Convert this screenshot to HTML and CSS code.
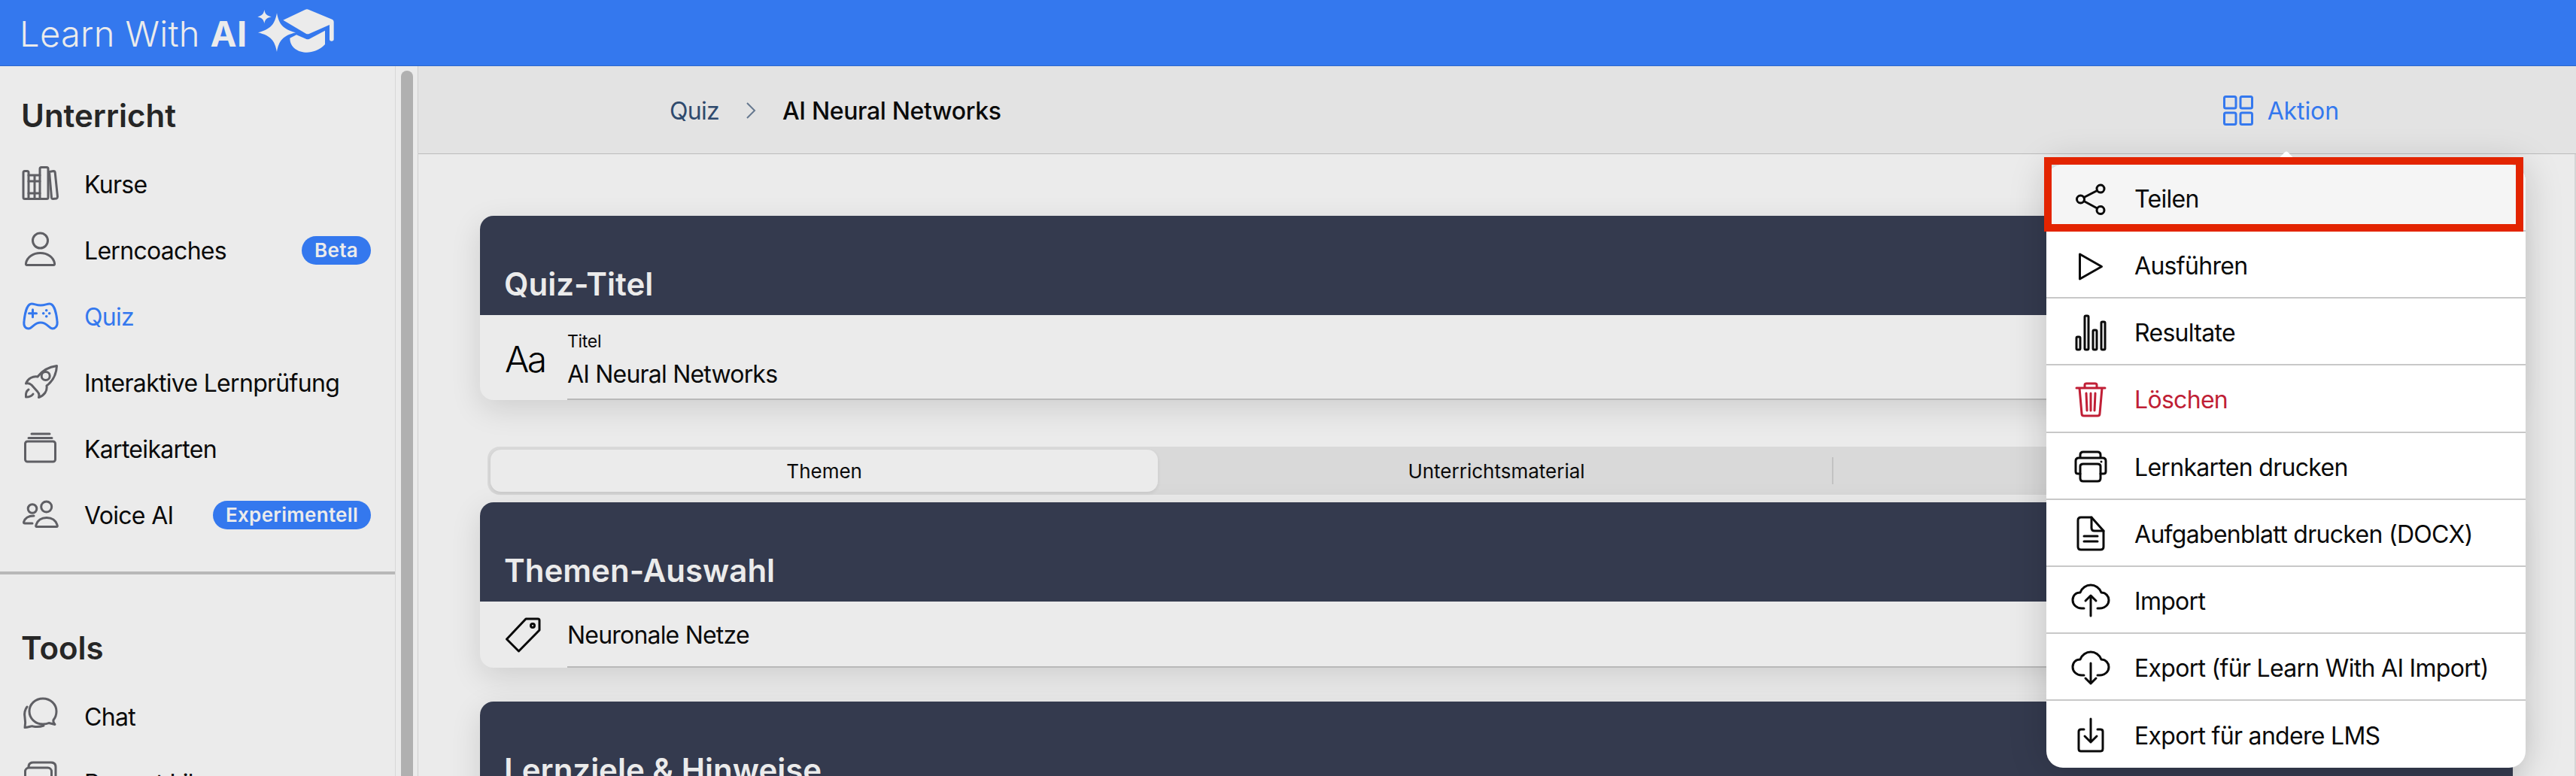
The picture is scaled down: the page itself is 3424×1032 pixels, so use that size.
FILE: index.html
```html
<!DOCTYPE html>
<html lang="de">
<head>
<meta charset="utf-8">
<title>Learn With AI</title>
<link rel="stylesheet" href="styles.css">
</head>
<body>
<header class="topbar">
  <div class="logo-text">Learn With <b>AI</b></div>
  <svg class="logo-mark" viewBox="0 0 390 240"><path d="M120 40C128 85 145 105 195 118C145 130 128 150 120 195C112 150 95 130 45 118C95 105 112 85 120 40Z"/><path d="M70 27C73 45 80 50 98 55C80 60 73 65 70 82C67 65 60 60 43 55C60 50 67 45 70 27Z"/><path d="M232 27Q240 23 248 27L340 65Q347 68 347 75V145Q347 152 338 152Q330 152 330 145V87L250 122Q243 126 236 122L145 68Z"/><path d="M172 140L198 127L236 143Q243 146 250 143L312 110V165C290 188 262 197 240 197C205 197 172 178 172 140Z"/></svg>
</header>
<div class="shell">
  <aside class="sidebar">
    <nav class="nav">
      <h2 class="nav-title">Unterricht</h2>
      <a class="nav-row">
        <svg class="ico" viewBox="0 0 48 48"><rect x="1" y="6.500" width="7" height="37" rx="2"/><path d="M8 12H23M8 20H23M8 36H23M8 43.500H23M16 12V43.500"/><rect x="23" y="1.500" width="11" height="42" rx="2"/><path d="M35.500 7.500L41 6.500Q43 6.500 43.200 8.500L46.500 40.500Q46.500 42.500 45 43L40.500 43.500Q38.800 43.500 38.500 41.500Z"/></svg>
        <span>Kurse</span>
      </a>
      <a class="nav-row">
        <svg class="ico" viewBox="0 0 48 48"><circle cx="23.500" cy="11" r="10"/><path d="M6 43.500Q4 43.500 4.500 41C6 33 14 27.500 23.500 27.500S41 33 42.500 41Q43 43.500 41 43.500Z"/></svg>
        <span>Lerncoaches</span>
        <em class="badge">Beta</em>
      </a>
      <a class="nav-row active">
        <svg class="ico" viewBox="0 0 48 48"><path d="M12 7C16 7 18 9 24 9S32 7 36 7C42 7 45 20 46 30C47 37 43 40 40 40C35 40 33 32 24 32S13 40 8 40C4 40 1 37 2 30C3 20 6 7 12 7Z"/><path d="M8.500 19.700H18.500M13.500 14.700V24.700"/><circle class="dot" cx="31.700" cy="15.700" r="1.800"/><circle class="dot" cx="31.700" cy="23.700" r="1.800"/><circle class="dot" cx="27.700" cy="19.700" r="1.800"/><circle class="dot" cx="35.700" cy="19.700" r="1.800"/></svg>
        <span>Quiz</span>
      </a>
      <a class="nav-row">
        <svg class="ico" viewBox="0 0 48 48"><path d="M45.500 1.500C34 3 26 8 20 16C14 15 7 18 4.500 25C8 24 10 25 12 27L20 36C22 38 22.500 40 21.500 43.500C29 41 33 35 32 28C40 22 45 13 45.500 1.500Z"/><circle cx="30.700" cy="15" r="5.500"/><path d="M8 33C5 35 4 39 4.500 43C9 43 12 42 14 39"/></svg>
        <span>Interaktive Lernprüfung</span>
      </a>
      <a class="nav-row">
        <svg class="ico" viewBox="0 0 48 48"><rect x="3.500" y="14" width="40" height="27" rx="3"/><path d="M8 9.500H39M12 4H36"/></svg>
        <span>Karteikarten</span>
      </a>
      <a class="nav-row">
        <svg class="ico" viewBox="0 0 48 48"><circle cx="31.700" cy="13" r="7"/><circle cx="13" cy="15.500" r="5.800"/><path d="M19 39.500Q17 39.500 18 37C20 31 25 27.500 32 27.500S44 31 46 37Q47 39.500 45 39.500Z"/><path d="M15 25C8 25 3 28 1.500 33.500Q1.500 35 3 35H13"/></svg>
        <span>Voice AI</span>
        <em class="badge">Experimentell</em>
      </a>
      <hr class="nav-divider">
      <h2 class="nav-title">Tools</h2>
      <a class="nav-row">
        <svg class="ico" viewBox="0 0 48 48"><path d="M27 0C17 0 9 7.500 9 17S17 34 27 34C30 34 33 33.500 35 32.500L43 34.500C41 32 40.500 30 41 28.500C43.500 25.500 45 21.500 45 17C45 7.500 37 0 27 0Z"/><path d="M6 11C3 15 2 20 3 25C3.500 28 4 34 3 38.500C8 38.500 11 36 14 37C19 38 24 37.500 28 36"/></svg>
        <span>Chat</span>
      </a>
      <a class="nav-row">
        <svg class="ico" viewBox="0 0 48 48"><path d="M8 3Q8 -3 14 -3H38Q44 -3 44 3V30"/><rect x="3.500" y="4" width="35" height="34" rx="5"/></svg>
        <span>Prompt Library</span>
      </a>
    </nav>
    <div class="scroll-track"><div class="scroll-thumb"></div></div>
  </aside>
  <main class="main">
    <div class="toolbar">
      <div class="crumbs">
        <span class="crumb-link">Quiz</span>
        <svg class="crumb-sep" viewBox="0 0 14 22"><path d="M2 1L12 11L2 21"/></svg>
        <span class="crumb-current">AI Neural Networks</span>
      </div>
      <div class="action">
        <svg class="action-ico" viewBox="0 0 40 40"><rect x="1.500" y="1.500" width="15.500" height="15.500" rx="2"/><rect x="23" y="1.500" width="15.500" height="15.500" rx="2"/><rect x="1.500" y="23" width="15.500" height="15.500" rx="2"/><rect x="23" y="23" width="15.500" height="15.500" rx="2"/></svg>
        <span>Aktion</span>
      </div>
    </div>
    <div class="content">
      <section class="card">
        <h3 class="card-head">Quiz-Titel</h3>
        <div class="field tall">
          <span class="aa">Aa</span>
          <div class="field-body">
            <small>Titel</small>
            <span>AI Neural Networks</span>
          </div>
        </div>
      </section>
      <div class="segments">
        <div class="seg selected">Themen</div>
        <div class="seg">Unterrichtsmaterial</div>
        <div class="seg sep"></div>
      </div>
      <section class="card after-seg">
        <h3 class="card-head">Themen-Auswahl</h3>
        <div class="field">
          <svg class="field-ico" viewBox="0 0 48 48"><path d="M28 3H44Q46 3 46 5V18L18.500 46L2.500 30Z"/><circle cx="37" cy="12" r="2.500"/></svg>
          <div class="field-body"><span>Neuronale Netze</span></div>
        </div>
      </section>
      <section class="card after-card">
        <h3 class="card-head">Lernziele &amp; Hinweise</h3>
      </section>
    </div>
  </main>
</div>
<div class="menu">
  <i class="menu-arrow"></i>
  <a class="menu-row hover">
    <svg class="ico-m" viewBox="0 0 48 48"><circle cx="37" cy="10" r="5"/><circle cx="10.500" cy="24" r="5"/><circle cx="37" cy="38.500" r="5"/><path d="M32.500 12.500L15 21.500M15 26.500L32.500 36"/></svg>
    <span>Teilen</span>
  </a>
  <a class="menu-row">
    <svg class="ico-m" viewBox="0 0 48 48"><path d="M9.500 8L38.500 24.500L9.500 41Z"/></svg>
    <span>Ausführen</span>
  </a>
  <a class="menu-row">
    <svg class="ico-m" viewBox="0 0 48 48"><rect x="5" y="29" width="5" height="17" rx="1.500"/><rect x="16" y="1" width="5" height="45" rx="1.500"/><rect x="27" y="20" width="5" height="26" rx="1.500"/><rect x="38" y="9" width="5" height="37" rx="1.500"/></svg>
    <span>Resultate</span>
  </a>
  <a class="menu-row danger">
    <svg class="ico-m" viewBox="0 0 48 48"><path d="M5 8H43M16 8V4Q16 2 18 2H30Q32 2 32 4V8M9 8L12 42Q12 45 15 45H33Q36 45 36 42L39 8M18 15L19 38M24 15V38M30 15L29 38"/></svg>
    <span>Löschen</span>
  </a>
  <a class="menu-row">
    <svg class="ico-m" viewBox="0 0 48 48"><path d="M10 23V39Q10 43 14 43H33Q37 43 37 39V23Q37 20 33 20H14Q10 20 10 23Z"/><path d="M10 33H7Q4 33 4 30V16Q4 12 8 12H40Q44 12 44 16V30Q44 33 41 33H37M10 12V8Q10 4 14 4H33Q37 4 37 8V12"/><circle class="dot" cx="38" cy="17" r="1.500"/></svg>
    <span>Lernkarten drucken</span>
  </a>
  <a class="menu-row">
    <svg class="ico-m" viewBox="0 0 48 48"><path d="M11 2H25L41 20V41Q41 45 37 45H11Q7 45 7 41V6Q7 2 11 2Z"/><path d="M25 2V16Q25 20 29 20H41M15 27H33M15 34H33"/></svg>
    <span>Aufgabenblatt drucken (DOCX)</span>
  </a>
  <a class="menu-row">
    <svg class="ico-m" viewBox="0 0 48 48"><path d="M15 34H12C5 34 0 29 0 23C0 17 4 13 10 13C12 7 18 3 24 3C30 3 36 7 38 13C44 13 48 18 48 23C48 29 43 34 36 34H33"/><path d="M24 44V17M17 24L24 17L31 24"/></svg>
    <span>Import</span>
  </a>
  <a class="menu-row">
    <svg class="ico-m" viewBox="0 0 48 48"><path d="M15 34H12C5 34 0 29 0 23C0 17 4 13 10 13C12 7 18 3 24 3C30 3 36 7 38 13C44 13 48 18 48 23C48 29 43 34 36 34H33"/><path d="M24 18V45M17 38L24 45L31 38"/></svg>
    <span>Export (für Learn With AI Import)</span>
  </a>
  <a class="menu-row">
    <svg class="ico-m" viewBox="0 0 48 48"><path d="M15 15H11Q8 15 8 18V41Q8 44 11 44H37Q40 44 40 41V18Q40 15 37 15H33"/><path d="M24 1V32M16 24L24 32L32 24"/></svg>
    <span>Export für andere LMS</span>
  </a>
  <div class="highlight"></div>
</div>
</body>
</html>
```

FILE: styles.css
```css
* { box-sizing: border-box; }
html, body { height: 100%; }
body {
  margin: 0;
  height: 1032px;
  overflow: hidden;
  background: #ebebeb;
  color: #0a0a0a;
  font-family: Inter, "Liberation Sans", sans-serif;
  display: flex;
  flex-direction: column;
}
.topbar {
  flex: 0 0 88px;
  background: #3478ee;
  border-bottom: 1px solid #2c67cc;
  display: flex;
  align-items: center;
  padding-left: 26px;
}
.logo-text {
  color: #ebebeb;
  font-size: 47px;
  font-weight: 300;
  letter-spacing: .35px;
  white-space: nowrap;
  padding-top: 1px;
}
.logo-text b { font-weight: 700; }
.logo-mark { width: 130px; height: 80px; fill: #ebebeb; }
.shell { flex: 1; display: flex; min-height: 0; }
.sidebar { flex: 0 0 556px; display: flex; border-right: 1px solid #cfcfcf; }
.nav { flex: 0 0 525px; padding-top: 32px; overflow: hidden; }
.nav-title {
  margin: 0 0 17px;
  padding: 2px 0 0 28px;
  height: 64px;
  line-height: 64px;
  font-size: 42px;
  font-weight: 600;
  color: #262626;
}
.nav-row {
  display: flex;
  align-items: center;
  height: 88px;
  padding: 0 32px 0 30px;
  gap: 34px;
  font-size: 32px;
  letter-spacing: -.7px;
  color: #0a0a0a;
}
.ico {
  flex: 0 0 48px;
  width: 48px;
  height: 48px;
  overflow: visible;
  fill: none;
  stroke: #5f5f64;
  stroke-width: 3;
  stroke-linejoin: round;
  stroke-linecap: round;
}
.nav-row.active { color: #3478ee; }
.nav-row.active .ico { stroke: #3478ee; }
.nav-row.active .dot { fill: #3478ee; stroke: none; }
.badge {
  margin-left: auto;
  height: 38px;
  line-height: 38px;
  padding: 0 17px;
  border-radius: 19px;
  background: #3478ee;
  color: #ebebeb;
  font-style: normal;
  font-size: 26px;
  font-weight: 600;
  letter-spacing: .3px;
}
.nav-divider {
  margin: 31px 0 64px;
  height: 4px;
  border: 0;
  background: #b8b8b8;
}
.scroll-track {
  flex: 0 0 30px;
  border-left: 1px solid #d8d8d8;
  padding: 6px 6px 0 7px;
}
.scroll-thumb { height: 1200px; background: #b0b0b0; border-radius: 8px; }
.main { flex: 1; min-width: 0; display: flex; flex-direction: column; }
.toolbar {
  flex: 0 0 117px;
  background: #e3e3e3;
  border-bottom: 1px solid #bcbcbc;
  display: flex;
  align-items: center;
  justify-content: space-between;
  padding: 2px 315px 0 334px;
  font-size: 32px;
  letter-spacing: -.7px;
}
.crumbs { display: flex; align-items: center; }
.crumb-link { color: #2f4a6d; }
.crumb-sep { width: 14px; height: 22px; margin: 0 35px 0 35px; fill: none; stroke: #66788f; stroke-width: 2; }
.crumb-current { font-weight: 500; letter-spacing: -.35px; color: #0a0a0a; }
.action { display: flex; align-items: center; gap: 19px; color: #3478ee; letter-spacing: -.1px; }
.action-ico { width: 40px; height: 40px; fill: none; stroke: #3478ee; stroke-width: 3; }
.content {
  flex: 1;
  min-height: 0;
  overflow: hidden;
  padding: 82px 82px 0 82px;
  border-right: 2px solid #d5d5d5;
}
.card {
  background: #ebebeb;
  border-radius: 18px;
  box-shadow: 0 12px 40px rgba(0, 0, 0, .12);
}
.after-seg { margin-top: 10px; }
.after-card { margin-top: 45px; }
.card-head {
  margin: 0;
  height: 132px;
  padding: 60px 32px 0;
  background: #343a4e;
  border-radius: 18px 18px 0 0;
  color: #ebebeb;
  font-size: 42px;
  line-height: 62px;
  font-weight: 600;
}
.field {
  height: 88px;
  display: flex;
  align-items: center;
  font-size: 32px;
  letter-spacing: -.8px;
  padding-left: 33px;
}
.field.tall { height: 113px; }
.aa { width: 83px; font-size: 48px; font-weight: 300; line-height: 1; letter-spacing: -2.5px; padding-top: 4px; color: #000; }
.field-ico { width: 48px; height: 48px; margin-right: 35px; fill: none; stroke: #0a0a0a; stroke-width: 3; stroke-linejoin: round; }
.field-body {
  flex: 1;
  align-self: stretch;
  display: flex;
  flex-direction: column;
  justify-content: center;
  padding-top: 3px;
  border-bottom: 2px solid #b9b9b9;
}
.field.tall .field-body { padding-top: 5px; }
.field-body small { font-size: 23px; line-height: 32px; margin-bottom: 8px; letter-spacing: -.3px; }
.segments {
  margin: 62px 10px 0;
  height: 64px;
  padding: 4px;
  background: #d9d9d9;
  border-radius: 16px;
  display: grid;
  grid-template-columns: repeat(3, 1fr);
  font-size: 26px;
}
.seg { display: flex; align-items: center; justify-content: center; }
.seg.selected {
  background: #ebebeb;
  border-radius: 14px;
  margin-right: 4px;
  box-shadow: 0 2px 5px rgba(0, 0, 0, .08);
}
.seg.sep { border-left: 2px solid #c2c2c2; margin: 10px 0; }
.menu {
  position: absolute;
  left: 2720px;
  top: 219px;
  width: 637px;
  background: #fff;
  border-radius: 22px;
  box-shadow: 0 0 50px rgba(0, 0, 0, .18);
  font-size: 32px;
  letter-spacing: -.7px;
}
.menu-arrow {
  position: absolute;
  left: 308px;
  top: -14px;
  width: 22px;
  height: 22px;
  background: #fff;
  border-radius: 3px;
  transform: rotate(45deg);
}
.menu-row {
  position: relative;
  display: flex;
  align-items: center;
  height: 89.125px;
  padding: 4px 0 0 35px;
  gap: 34px;
  border-bottom: 2px solid #c8c8c8;
  color: #0a0a0a;
}
.menu-row:last-of-type { border-bottom: 0; border-radius: 0 0 22px 22px; }
.menu-row.hover { background: #f5f5f5; border-radius: 22px 22px 0 0; }
.menu-row.danger { color: #c01f36; }
.menu-row.danger .ico-m { stroke: #c01f36; }
.ico-m {
  flex: 0 0 48px;
  width: 48px;
  height: 48px;
  overflow: visible;
  fill: none;
  stroke: #0a0a0a;
  stroke-width: 3;
  stroke-linejoin: round;
  stroke-linecap: round;
}
.ico-m .dot { fill: #0a0a0a; stroke: none; }
.highlight {
  position: absolute;
  left: -3px;
  top: -10px;
  width: 637px;
  height: 99px;
  border: 10px solid #e32400;
}
```
